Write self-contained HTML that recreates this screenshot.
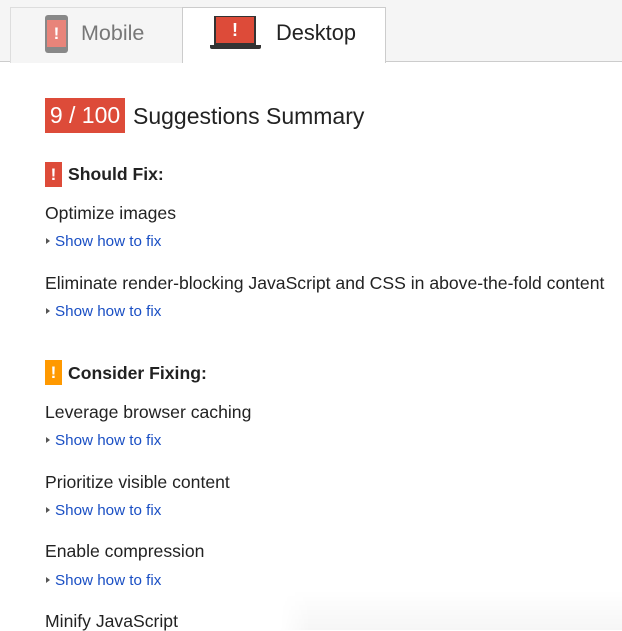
<!DOCTYPE html>
<html><head><meta charset="utf-8"><style>
*{margin:0;padding:0;box-sizing:border-box}
body{width:622px;height:630px;background:#fff;font-family:"Liberation Sans",Arial,sans-serif;position:relative;overflow:hidden;color:#222}
.a{position:absolute;white-space:nowrap}
.t{font-size:17.6px;line-height:20px;color:#222}
.l{font-size:15.2px;line-height:18px;color:#1a4fc4}
.l:before{content:"";display:inline-block;width:0;height:0;border-left:4px solid #555;border-top:3.5px solid transparent;border-bottom:3.5px solid transparent;margin:0 5px 1px 1px;vertical-align:middle}
.h{font-size:17.6px;font-weight:bold;line-height:20px;color:#222}
.ic{position:absolute;width:17px;height:25px;color:#fff;font-weight:bold;font-size:17px;text-align:center;line-height:25px}
</style></head><body>
<div class="a" style="left:0;top:0;width:622px;height:62px;background:#f5f5f5;border-bottom:1px solid #ccc"></div>
<div class="a" style="left:10px;top:7px;width:173px;height:56px;border:1px solid #ddd;border-bottom:none;background:#f5f5f5"></div>
<div class="a" style="left:182px;top:7px;width:204px;height:56px;border:1px solid #ccc;border-bottom:none;background:#fff"></div>
<!-- phone -->
<div class="a" style="left:45px;top:15px;width:23px;height:38px;background:#888;border-radius:3px"></div>
<div class="a" style="left:47px;top:20px;width:19px;height:27px;background:#e8847a;color:#fff;font-weight:bold;font-size:17px;text-align:center;line-height:27px">!</div>
<div class="a" style="left:81px;top:21px;font-size:21.5px;color:#777;line-height:24px">Mobile</div>
<!-- laptop -->
<div class="a" style="left:214px;top:16px;width:42px;height:29px;background:#333"></div>
<div class="a" style="left:216px;top:17px;width:38px;height:26px;background:#dd4b39;color:#fff;font-weight:bold;font-size:18px;text-align:center;line-height:26px">!</div>
<div class="a" style="left:210px;top:45px;width:51px;height:4px;background:#333;border-radius:0 0 2px 2px"></div>
<div class="a" style="left:276px;top:21px;font-size:21.8px;color:#222;line-height:24px">Desktop</div>
<!-- score -->
<div class="a" style="left:45px;top:98px;width:80px;height:35px;background:#dd4b39;color:#fff;font-size:23px;line-height:35px;text-align:center">9 / 100</div>
<div class="a" style="left:133px;top:102px;font-size:23px;line-height:28px;color:#222">Suggestions Summary</div>
<div class="ic" style="left:45px;top:162px;background:#dd4b39">!</div>
<div class="a h" style="left:68px;top:164px">Should Fix:</div>
<div class="a t" style="left:45px;top:203px">Optimize images</div>
<div class="a l" style="left:45px;top:233px">Show how to fix</div>
<div class="a t" style="left:45px;top:273px">Eliminate render-blocking JavaScript and CSS in above-the-fold content</div>
<div class="a l" style="left:45px;top:303px">Show how to fix</div>
<div class="ic" style="left:45px;top:360px;background:#f90">!</div>
<div class="a h" style="left:68px;top:363px">Consider Fixing:</div>
<div class="a t" style="left:45px;top:402px">Leverage browser caching</div>
<div class="a l" style="left:45px;top:432px">Show how to fix</div>
<div class="a t" style="left:45px;top:472px">Prioritize visible content</div>
<div class="a l" style="left:45px;top:502px">Show how to fix</div>
<div class="a t" style="left:45px;top:541px">Enable compression</div>
<div class="a l" style="left:45px;top:572px">Show how to fix</div>
<div class="a t" style="left:45px;top:611px">Minify JavaScript</div>
<div class="a" style="left:280px;top:590px;width:342px;height:40px;background:linear-gradient(to bottom,rgba(0,0,0,0),rgba(0,0,0,0.035));-webkit-mask-image:linear-gradient(to right,transparent,#000 30px)"></div>
</body></html>
